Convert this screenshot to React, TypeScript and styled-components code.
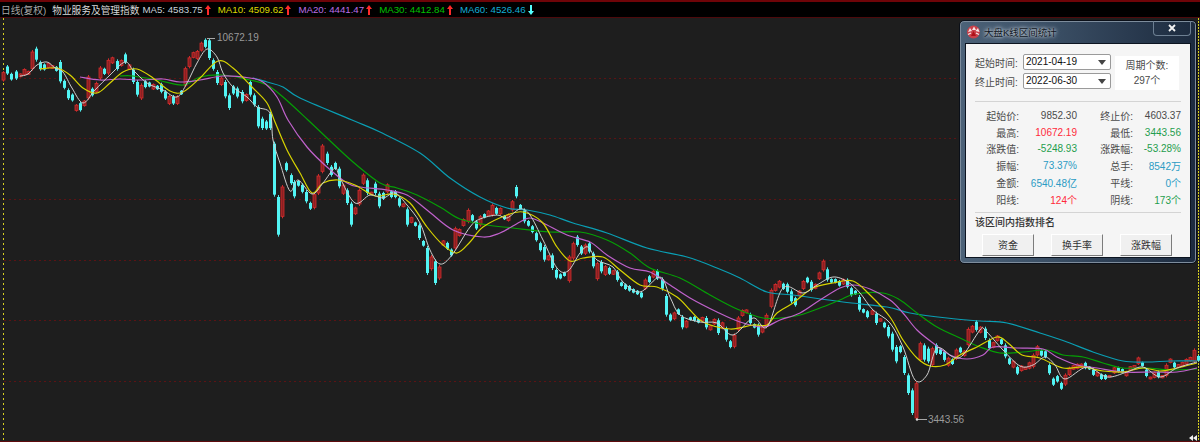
import React from "react";
import styled, { createGlobalStyle } from "styled-components";

const GlobalStyle = createGlobalStyle`
  html, body {
    margin: 0;
    height: 100%;
    background: #1e1e1e;
    overflow: hidden;
    font-family: "Liberation Sans", "Noto Sans CJK SC", sans-serif;
  }
  #root { height: 100%; }
`;

const Page = styled.div`
  display: flex;
  flex-direction: column;
  width: 1200px;
  height: 442px;
`;

const TopBar = styled.header`
  display: flex;
  align-items: center;
  gap: 7px;
  height: 15px;
  padding: 0 0 0 1px;
  box-sizing: content-box;
  border-top: 2px solid #6e0408;
  border-bottom: 1px solid #4d0a0c;
  background: #000;
  font-size: 9.7px;
  white-space: nowrap;
`;

const PeriodText = styled.span`
  color: #a8a8a8;
  font-size: 9.7px;
  margin-right: -1px;
`;

const IndexName = styled.span`
  color: #d8d8d8;
  margin-right: -4px;
`;

const MaItem = styled.span<{ $color: string }>`
  display: flex;
  align-items: center;
  gap: 2px;
  color: ${(p) => p.$color};
`;

const ChartArea = styled.main`
  position: relative;
  flex: 1;
  border-bottom: 1px solid #5e0b0d;
  background: #1e1e1e;
`;

const ChartSvg = styled.svg`
  display: block;
  width: 100%;
  height: 100%;
`;

const Dialog = styled.section`
  position: absolute;
  top: 2px;
  left: 959px;
  display: flex;
  flex-direction: column;
  width: 238px;
  height: 244px;
  box-sizing: border-box;
  border: 1px solid #0a0f18;
  border-radius: 5px;
  padding: 0 5px 5px;
  background: linear-gradient(90deg, #4c6278 0%, #3a4e64 40%, #1c2a3e 100%);
  box-shadow: inset 0 0 0 1px #7d8c9c;
`;

const TitleBar = styled.div`
  display: flex;
  align-items: center;
  flex: 0 0 22px;
  gap: 3px;
  padding-left: 1px;
  color: #10161e;
  font-size: 9.5px;
  text-shadow: 0 0 5px #d0d8e0, 0 0 3px #d0d8e0;
`;

const CloseButton = styled.span`
  display: flex;
  align-items: center;
  justify-content: center;
  width: 38px;
  height: 15px;
  margin: -7px 0 0 auto;
  box-sizing: border-box;
  border: 1px solid #6d7f92;
  border-top: none;
  border-radius: 0 0 4px 4px;
`;

const DialogBody = styled.div`
  flex: 1;
  padding: 10px 9px 0;
  border: 1px solid #0c1420;
  background: #f5f5f5;
  color: #4a4a4a;
  font-size: 10px;
`;

const FormRow = styled.div`
  display: flex;
  gap: 4px;
`;

const DateColumn = styled.div`
  display: grid;
  grid-template-columns: 45px 88px;
  grid-auto-rows: 16px;
  row-gap: 3px;
  align-items: center;
  column-gap: 3px;
`;

const DateSelect = styled.div`
  position: relative;
  height: 16px;
  box-sizing: border-box;
  padding-left: 2px;
  border: 1px solid #9a9a9a;
  border-radius: 2px;
  background: #fff;
  color: #111;
  font-size: 10px;
  line-height: 14px;

  &::after {
    content: "";
    position: absolute;
    top: 5px;
    right: 4px;
    border-top: 5px solid #444;
    border-left: 4px solid transparent;
    border-right: 4px solid transparent;
  }
`;

const PeriodBox = styled.div`
  display: flex;
  flex-direction: column;
  align-items: center;
  justify-content: center;
  gap: 2px;
  width: 64px;
  height: 34px;
  margin-top: 2px;
  background: #fff;
  line-height: 13px;
`;

const Divider = styled.hr`
  height: 1px;
  margin: 0;
  border: none;
  background: #d4d4d4;
`;

const TopDivider = styled(Divider)`
  margin: 11px 0 5px;
`;

const BottomDivider = styled(Divider)`
  margin: 4px 0 4px;
`;

const StatGrid = styled.div`
  display: grid;
  grid-template-columns: 44px 58px 56px 48px;
  grid-auto-rows: 16.8px;
  align-items: center;
`;

const StatLabel = styled.span`
  text-align: right;
`;

const StatValue = styled.span<{ $color?: string }>`
  text-align: right;
  color: ${(p) => p.$color || "#4a4a4a"};
`;

const SectionTitle = styled.div`
  color: #333;
  font-weight: 500;
  line-height: 12px;
`;

const ButtonRow = styled.div`
  display: flex;
  justify-content: center;
  gap: 17px;
  margin: 5px 2px 0 0;
`;

const RankButton = styled.button`
  width: 52px;
  height: 22px;
  padding: 0;
  border: 1px solid;
  border-color: #fff #7c7c7c #7c7c7c #fff;
  background: #f0f0f0;
  color: #333;
  font: inherit;
`;

const RED = "#ff2a3a";
const GREEN = "#1f9d4d";
const BLUE = "#2b9bc4";

type Pt = [number, number];

const pts = (s: string): Pt[] =>
  s.trim().split(/\s+/).map((p) => p.split(",").map(Number) as Pt);

const smooth = (p: Pt[]): string => {
  let d = `M${p[0][0]} ${p[0][1]}`;
  for (let i = 0; i < p.length - 1; i++) {
    const a = p[Math.max(i - 1, 0)];
    const b = p[i];
    const c = p[i + 1];
    const e = p[Math.min(i + 2, p.length - 1)];
    const c1x = b[0] + (c[0] - a[0]) / 6;
    const c1y = b[1] + (c[1] - a[1]) / 6;
    const c2x = c[0] - (e[0] - b[0]) / 6;
    const c2y = c[1] - (e[1] - b[1]) / 6;
    d += `C${c1x.toFixed(1)} ${c1y.toFixed(1)} ${c2x.toFixed(1)} ${c2y.toFixed(1)} ${c[0]} ${c[1]}`;
  }
  return d;
};

const ma5 = pts(`20,76 28,74 37,65 47,62 55,68 63,72 72,88 83,103 95,90 110,75 125,62 133,70 147,83 163,90 177,97 187,83 197,63 207,49 217,57 223,73 233,87 247,97 257,107 270,113 273,140 280,163 290,191 298,180 312,194 323,183 335,168 340,178 355,203 370,195 383,198 395,193 407,205 420,223 430,250 440,264 452,255 470,227 480,219 497,215 507,218 520,209 530,215 543,240 557,268 568,271 580,253 588,247 597,260 613,267 623,282 640,292 660,277 670,297 680,315 700,322 717,323 733,335 753,318 767,327 783,288 803,293 817,285 833,277 848,282 860,293 873,310 890,323 903,347 915,380 927,375 937,348 953,357 963,355 980,330 985,330 1003,350 1020,366 1033,365 1045,357 1055,365 1065,379 1087,367 1107,377 1127,372 1143,367 1160,377 1177,368 1197,362`);
const ma10 = pts(`40,69 57,68 70,75 83,88 97,93 110,83 123,72 137,69 153,78 170,91 183,92 200,78 218,61 233,68 253,88 267,103 275,122 287,150 300,173 312,193 323,183 338,180 355,185 375,196 393,194 410,203 427,227 443,245 457,253 470,242 483,227 507,215 523,212 542,222 557,247 570,261 583,258 603,257 620,270 640,285 657,287 677,297 690,310 703,322 730,329 753,325 767,325 777,313 793,303 813,288 833,283 853,281 870,295 890,317 903,340 917,358 930,366 945,365 960,355 977,347 997,337 1008,343 1022,355 1040,358 1063,368 1083,367 1103,371 1123,372 1143,368 1160,371 1177,368 1197,363`);
const ma20 = pts(`80,77 100,80 120,79 140,80 163,79 180,82 200,80 223,76 250,78 263,82 277,97 288,120 307,147 327,167 347,183 360,187 387,190 407,195 427,210 453,230 483,237 500,233 520,222 530,218 543,223 567,235 590,242 607,255 630,268 650,272 667,283 690,298 717,312 740,322 763,327 780,320 800,313 820,300 840,288 853,285 870,289 890,300 903,313 917,330 933,343 950,355 967,359 983,355 993,347 1017,348 1043,349 1057,357 1077,365 1097,368 1123,372 1153,372 1177,372 1197,368`);
const ma30 = pts(`120,76 133,76 157,80 183,85 200,77 223,75 250,80 267,85 283,97 308,120 327,138 353,162 380,183 397,188 417,195 440,207 460,219 487,225 513,228 550,232 580,232 607,240 630,253 650,268 680,278 710,295 737,309 763,318 780,318 800,315 820,308 840,300 855,294 883,293 900,300 917,313 937,327 960,338 980,347 1000,353 1023,352 1047,350 1063,355 1083,357 1103,363 1123,368 1147,368 1170,370 1197,369`);
const ma60 = pts(`253,78 267,82 283,87 300,98 352,120 380,132 420,153 450,178 480,197 507,208 527,210 550,215 573,223 607,233 647,248 687,257 717,268 740,278 767,292 793,295 843,302 887,307 910,313 947,318 980,321 1007,323 1040,333 1067,342 1093,352 1123,361 1147,362 1170,361 1197,361`);

const maLines = [
  { d: ma60, color: "#0a9fb4", width: 1.2 },
  { d: ma30, color: "#05a005", width: 1.2 },
  { d: ma20, color: "#c062cc", width: 1.2 },
  { d: ma10, color: "#d8d400", width: 1.2 },
  { d: ma5, color: "#cfcfcf", width: 1 },
];

type Candle = { x: number; top: number; bottom: number; up: boolean };

// candle list read off the picture: r/c + column, top, bottom in 3x crop coords
const readCandles = (ox: number, oy: number, s: string): Candle[] =>
  s.trim().split(/\s+/).map((c) => {
    const [x, top, bottom] = c.slice(1).split(",").map(Number);
    return { x: ox + x / 3, top: oy + top / 3, bottom: oy + bottom / 3, up: c[0] === "r" };
  });

const candles: Candle[] = [
  ...readCandles(0, 0, `r10,213,245 c22,195,225 c34,218,242 c47,210,240 r59,220,232 r71,205,228 r83,212,225 r95,150,212 c107,140,185 c119,182,212 c131,190,212 r143,188,205 r155,195,207 c167,198,215 c180,180,250 c192,238,268 c205,265,300 c217,280,305 r229,312,335 c241,305,335 r253,300,320 r265,225,300 c277,262,290 r289,245,280 r301,198,240 c313,203,225 r325,175,225 r337,170,192 c350,178,212 r362,178,200 c374,158,192 r386,192,210 c398,203,252 c410,240,290 r422,250,300 c434,240,265 c446,245,262 r458,250,270 c470,255,270 c482,248,280 c494,270,300 r506,285,315 c518,285,315 r530,285,315 c542,270,285 r556,200,262 r568,168,205 r580,155,175 r592,150,180 r604,125,155 c616,115,145 c628,115,180 c640,175,212 c652,210,255 r664,230,258 c676,240,295 c688,280,330 c700,255,285 c712,260,295 c725,270,310 r737,280,305 c749,240,290 c761,280,320 c773,315,385 c785,350,390 c797,360,390 c809,335,390`),
  ...readCandles(240, 120, `c102,65,230 c115,225,350 r127,195,295 c138,125,155 c152,160,195 c163,180,235 c175,180,200 c187,190,220 c199,210,250 c211,245,270 r223,218,268 r235,162,225 r247,72,160 c260,95,135 c272,135,170 c284,125,150 c296,140,205 r308,190,225 c320,205,255 c332,245,320 r344,260,285 r356,205,258 r368,160,195 c380,175,225 r392,215,225 c405,185,225 c417,215,265 c429,215,240 r441,190,220 c453,210,235 c465,210,235 c478,230,262 r490,250,262 c502,262,320 r514,290,310 c526,305,320 c538,310,360 c550,360,380 c562,378,465 r574,405,452 c586,418,495 r598,435,480 r610,360,378 c622,365,390 c634,385,410 r646,320,390 r658,325,350 r670,295,320 r684,265,310 c696,282,305 c708,300,330 r720,285,320 c732,280,295 r744,270,290 r756,250,290 c768,260,285 r780,262,285 c792,285,300 r804,280,305 r817,240,275 c828,195,235 c840,252,270`),
  ...readCandles(500, 190, `c73,55,100 c85,90,110 c97,105,130 c109,125,155 c121,155,185 c133,165,215 r145,195,212 c157,190,240 c169,235,268 c181,250,268 c193,245,260 r206,195,278 r218,155,210 c230,135,170 c242,165,195 r254,160,195 c266,155,190 c279,185,235 r291,215,272 c303,210,250 r316,225,258 c328,230,255 r340,240,255 c352,240,275 c364,275,290 c376,280,300 c388,285,305 c400,295,310 c412,300,315 c424,305,325 r436,265,300 c448,255,280 r460,240,265 c472,238,270 c485,262,302 c497,312,380 c509,370,395 r521,365,390 c533,355,375 c545,375,418 r557,390,415 c569,380,392 c581,378,395 c593,385,400 r605,380,395 c618,378,418 r630,405,422 r642,385,405 c654,385,435 r666,395,418 c678,410,455 c690,450,475 r703,430,475 r715,378,425 r727,358,380 r739,358,370 c751,368,405 c763,400,415 c775,400,440 r787,405,430 r799,370,415`),
  ...readCandles(760, 250, `r32,115,175 r44,100,125 r56,90,115 c68,98,120 c80,98,130 c92,118,160 c104,140,170 r116,120,140 r128,90,120 c140,80,100 c152,90,125 r164,100,118 r178,65,90 r190,28,65 c202,52,95 c214,85,100 c226,85,100 c238,90,110 r250,85,105 c262,85,115 c274,110,140 c286,120,135 c298,135,185 c310,175,190 c322,180,205 r335,180,195 c347,185,225 r359,205,215 c371,215,235 c383,225,265 c395,245,305 c407,285,340 c419,285,310 c431,315,375 c443,370,435 c455,415,495 r468,395,510 r480,275,335 c492,280,335 c504,290,340 r516,290,350 c528,280,315 c540,295,315 c552,300,335 r564,320,350 c576,325,345 r588,295,330 c600,290,310 r612,300,320 r625,232,290 r637,225,250 c649,210,245 r661,228,250`),
  ...readCandles(980, 300, `c14,80,120 c26,115,150 r38,125,145 r50,105,125 c62,115,135 c74,130,175 c86,172,195 r98,180,205 c110,197,225 r122,195,215 r134,200,210 r147,185,208 r159,160,205 r171,135,170 c183,148,170 c195,150,175 c207,190,225 c219,232,258 c231,225,248 c243,245,270 r255,220,258 r268,200,228 r280,195,210 r292,190,208 r304,190,205 c316,185,208 c328,198,210 c340,205,228 r352,215,230 c364,220,240 c376,222,240 r388,225,232 r402,200,222 c414,200,218 c426,205,220 r438,212,230 r450,198,212 r462,195,205 r474,170,195 c486,185,200 c498,205,232 r510,230,238 r522,215,235 c534,212,235 r546,225,235 r558,190,232 r570,175,190 c582,185,205 r594,192,205 r606,185,200 r618,175,195 r630,170,185 r642,145,190 c654,165,185`),
];

const gridLines = [78, 138, 199, 260, 320, 381];

const stats: [string, string, string | undefined, string, string, string | undefined][] = [
  ["起始价:", "9852.30", undefined, "终止价:", "4603.37", undefined],
  ["最高:", "10672.19", RED, "最低:", "3443.56", GREEN],
  ["涨跌值:", "-5248.93", GREEN, "涨跌幅:", "-53.28%", GREEN],
  ["振幅:", "73.37%", BLUE, "总手:", "8542万", BLUE],
  ["金额:", "6540.48亿", BLUE, "平线:", "0个", BLUE],
  ["阳线:", "124个", RED, "阴线:", "173个", GREEN],
];

const averages = [
  { label: "MA5: 4583.75", color: "#c8d0da", up: true },
  { label: "MA10: 4509.62", color: "#dcd800", up: true },
  { label: "MA20: 4441.47", color: "#bb6ee6", up: true },
  { label: "MA30: 4412.84", color: "#00c000", up: true },
  { label: "MA60: 4526.46", color: "#14aed6", up: false },
];

const TrendArrow = ({ up }: { up: boolean }) => (
  <svg width="6" height="10" viewBox="0 0 6 10">
    {up ? (
      <path d="M3 0 6 4H4V10H2V4H0Z" fill="#ff2a2a" />
    ) : (
      <path d="M3 10 6 6H4V0H2V6H0Z" fill="#55ffff" />
    )}
  </svg>
);

const DialogIcon = () => (
  <svg width="15" height="14" viewBox="0 0 15 14">
    <circle cx="7.5" cy="7" r="6.5" fill="#c9404a" />
    <path d="M2 7 4 3 6 6ZM6 5 8 1.5 10 5ZM9.5 6 12 3 13.5 7Z" fill="#f6e4e4" />
    <path d="M7.5 6 10 11H5Z" fill="#b01018" />
    <path d="M2 9.5 5 8M13 9.5 10 8" stroke="#f6e4e4" strokeWidth="1.2" />
  </svg>
);

const Chart = () => (
  <ChartSvg viewBox="0 18 1200 423" preserveAspectRatio="none">
    {gridLines.map((y) => (
      <line key={y} x1="4" x2="1197" y1={y + 0.5} y2={y + 0.5} stroke="#5c1214" strokeDasharray="2 3" />
    ))}
    <line x1="3.5" x2="3.5" y1="18" y2="441" stroke="#d8d020" strokeDasharray="2 3" />
    <line x1="1198.5" x2="1198.5" y1="18" y2="441" stroke="#d8d020" strokeDasharray="2 1" />
    {candles.map((c, i) => {
      const h = c.bottom - c.top;
      const inset = Math.min(2, h * 0.15);
      const cx = Math.round(c.x);
      return (
        <g key={i}>
          <line
            x1={cx + 0.5}
            x2={cx + 0.5}
            y1={c.top}
            y2={c.bottom}
            stroke={c.up ? "#cf2a2a" : "#4fe6e6"}
          />
          <rect
            x={cx - 1}
            y={c.top + inset}
            width="3"
            height={h - inset * 2}
            fill={c.up ? "#8a2022" : "#52f4f4"}
            stroke={c.up ? "#d42c2c" : "none"}
            strokeWidth={c.up ? 0.8 : 0}
          />
        </g>
      );
    })}
    {maLines.map((l) => (
      <path key={l.color} d={smooth(l.d)} fill="none" stroke={l.color} strokeWidth={l.width} />
    ))}
    <path d="M207 38.5H215" stroke="#a8a8a8" />
    <text x="217" y="41" fill="#9a9a9a" fontSize="10">10672.19</text>
    <path d="M917 419.5H927" stroke="#a8a8a8" />
    <circle cx="917" cy="419.5" r="1.2" fill="#d8d8d8" />
    <text x="928" y="423" fill="#9a9a9a" fontSize="10">3443.56</text>
    <path d="M1189 438 1193 435V441ZM1193 438 1197 435V441Z" fill="#f0f0f0" />
  </ChartSvg>
);

export default function App() {
  return (
    <Page>
      <GlobalStyle />
      <TopBar>
        <PeriodText>日线(复权)</PeriodText>
        <IndexName>物业服务及管理指数</IndexName>
        {averages.map((m) => (
          <MaItem key={m.label} $color={m.color}>
            {m.label}
            <TrendArrow up={m.up} />
          </MaItem>
        ))}
      </TopBar>
      <ChartArea>
        <Chart />
        <Dialog>
          <TitleBar>
            <DialogIcon />
            大盘K线区间统计
            <CloseButton>
              <svg width="8" height="8" viewBox="0 0 8 8">
                <path d="M1 1 7 7M7 1 1 7" stroke="#f4f4f4" strokeWidth="1.8" />
              </svg>
            </CloseButton>
          </TitleBar>
          <DialogBody>
            <FormRow>
              <DateColumn>
                <span>起始时间:</span>
                <DateSelect>2021-04-19</DateSelect>
                <span>终止时间:</span>
                <DateSelect>2022-06-30</DateSelect>
              </DateColumn>
              <PeriodBox>
                <span>周期个数:</span>
                <span>297个</span>
              </PeriodBox>
            </FormRow>
            <TopDivider />
            <StatGrid>
              {stats.map((r) => (
                <React.Fragment key={r[0]}>
                  <StatLabel>{r[0]}</StatLabel>
                  <StatValue $color={r[2]}>{r[1]}</StatValue>
                  <StatLabel>{r[3]}</StatLabel>
                  <StatValue $color={r[5]}>{r[4]}</StatValue>
                </React.Fragment>
              ))}
            </StatGrid>
            <BottomDivider />
            <SectionTitle>该区间内指数排名</SectionTitle>
            <ButtonRow>
              <RankButton>资金</RankButton>
              <RankButton>换手率</RankButton>
              <RankButton>涨跌幅</RankButton>
            </ButtonRow>
          </DialogBody>
        </Dialog>
      </ChartArea>
    </Page>
  );
}
